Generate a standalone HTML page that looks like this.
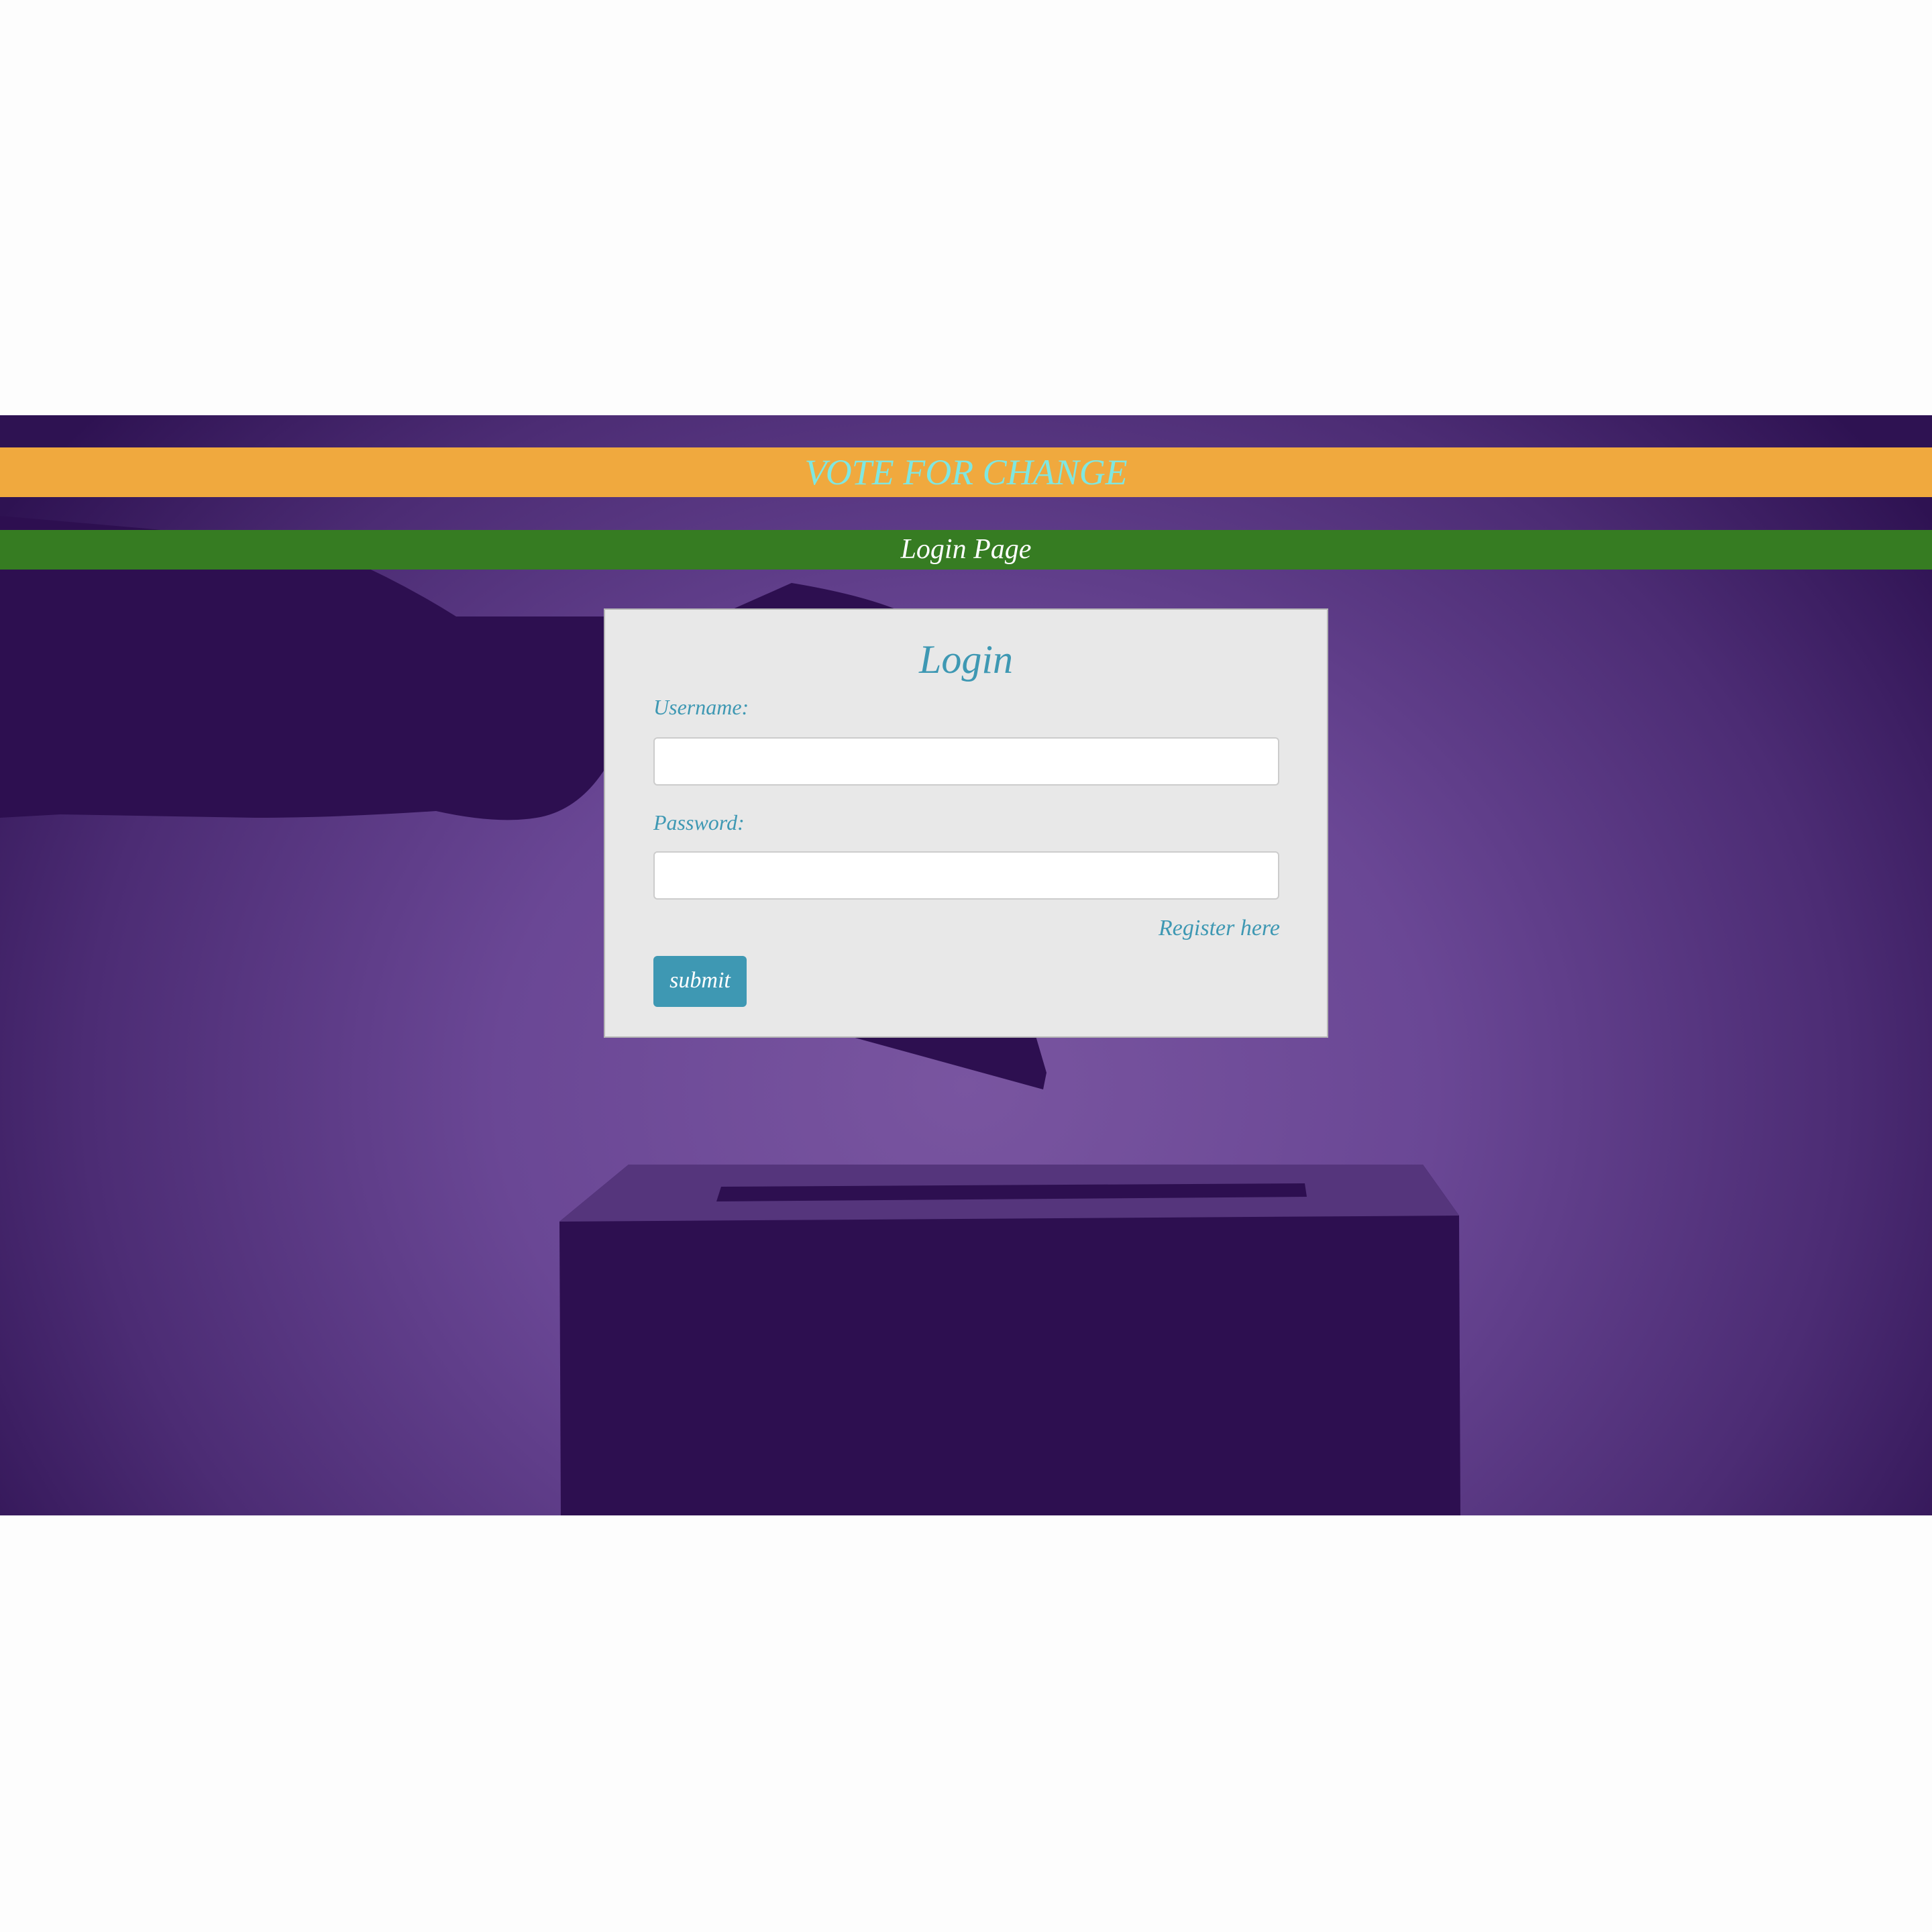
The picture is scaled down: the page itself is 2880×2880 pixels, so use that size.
<!DOCTYPE html>
<html><head><meta charset="utf-8"><style>
html,body{margin:0;padding:0;width:2880px;height:2880px;background:#fdfdfd;overflow:hidden;font-family:"Liberation Serif",serif;font-style:italic}
.bg{position:absolute;left:0;top:619px;width:2880px;height:1640px;background:radial-gradient(ellipse 1750px 1500px at 1440px 1000px,#7955a0 0%,#6a4795 40%,#4c2c74 75%,#2e1252 100%);overflow:hidden}
.bar{position:absolute;left:0;width:2880px;text-align:center}
.orange{top:667px;height:74px;background:#f0a93e;color:#7fe7e0;font-size:54px;line-height:74px}
.green{top:790px;height:59px;background:#367c22;color:#fff;font-size:42px;line-height:59px}
.box{position:absolute;left:900px;top:907px;width:1076px;height:636px;background:#e8e8e8;border:2px solid #b5b5b5}
.t{position:absolute;color:#3e98b3}
.inp{position:absolute;left:72px;width:933px;height:72px;background:#fff;border:2px solid #ccc;border-radius:6px;box-sizing:border-box}
.btn{position:absolute;left:72px;top:516px;width:139px;height:76px;background:#3e98b3;border-radius:6px;color:#fff;font-size:34px;line-height:74px;text-align:center}
</style></head><body>
<div class="bg">
<svg width="2880" height="1640" style="position:absolute;left:0;top:0">
<g fill="#2d0f50">
<path d="M0 150 L230 170 Q420 190 520 215 Q600 250 680 300 L900 300 L900 530 Q860 590 800 600 Q740 610 650 590 Q500 600 380 600 L90 595 L0 600 Z"/>
<path d="M1090 290 L1180 250 Q1300 270 1360 300 L1560 980 L1555 1005 L1100 880 Z"/>
<path d="M834 1202 L937 1117 L2121 1117 L2175 1193 L2177 1640 L836 1640 Z"/>
<path d="M937 1117 L2121 1117 L2175 1193 L834 1202 Z" fill="#55357c"/>
<path d="M1075 1150 L1945 1145 L1948 1165 L1068 1172 Z"/>
</g>
</svg>
</div>
<div class="bar orange">VOTE FOR CHANGE</div>
<div class="bar green">Login Page</div>
<div class="box">
<div class="t" style="left:0;width:1076px;text-align:center;top:40px;font-size:60px">Login</div>
<div class="t" style="left:72px;top:127px;font-size:32px">Username:</div>
<div class="inp" style="top:190px"></div>
<div class="t" style="left:72px;top:299px;font-size:32px">Password:</div>
<div class="inp" style="top:360px"></div>
<div class="t" style="right:70px;top:456px;font-size:34px">Register here</div>
<div class="btn">submit</div>
</div>
</body></html>
